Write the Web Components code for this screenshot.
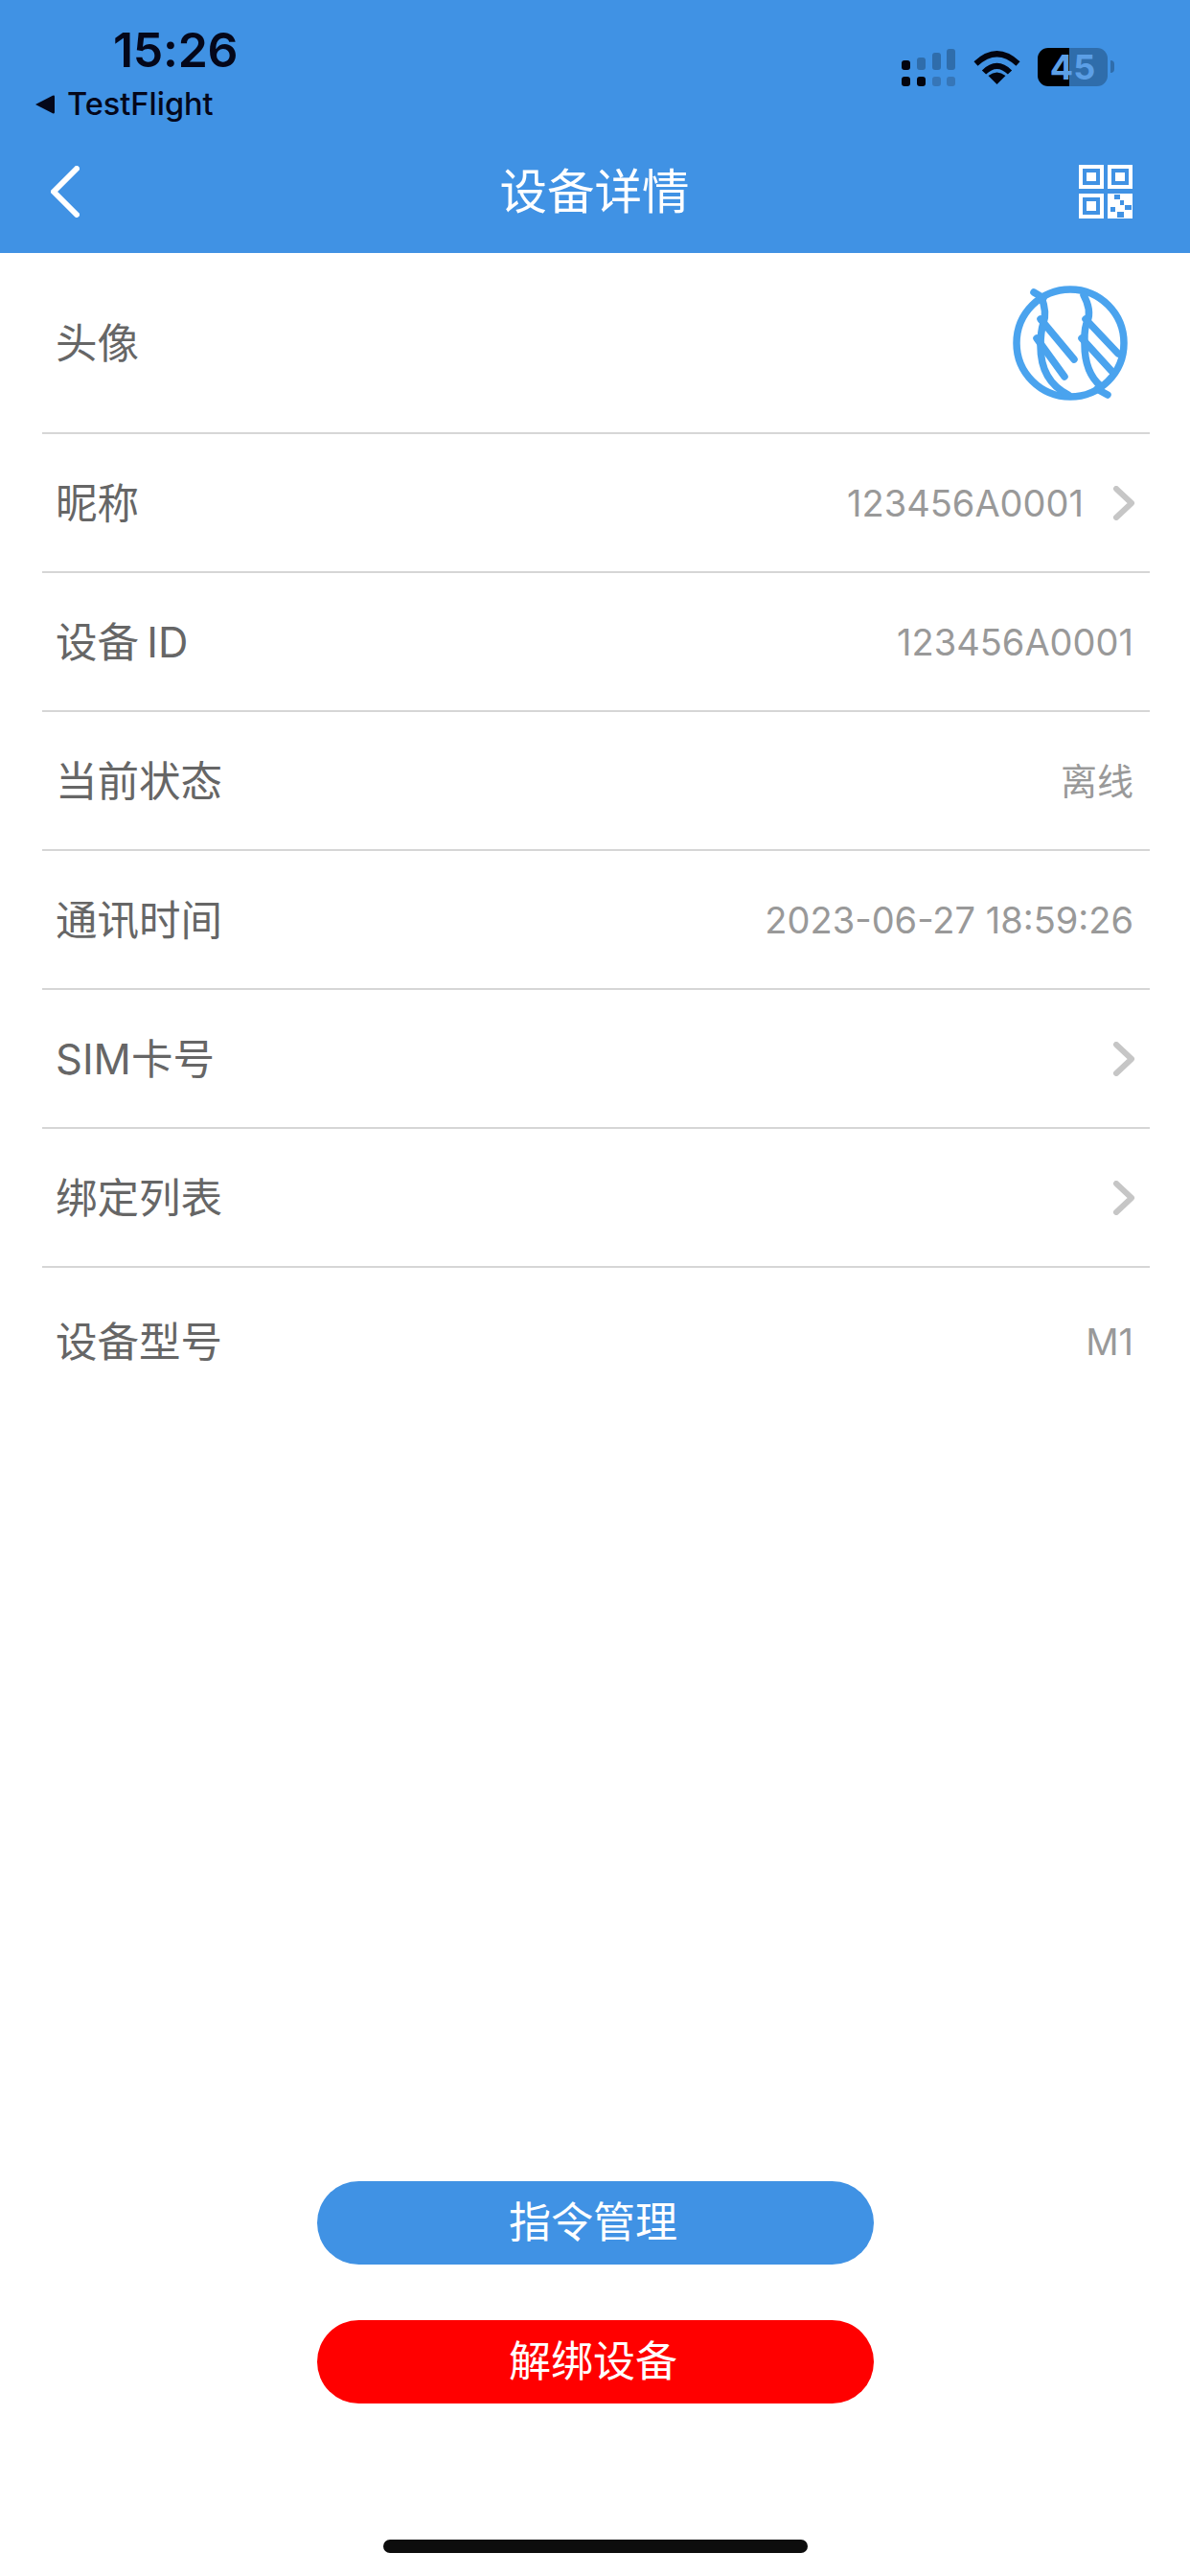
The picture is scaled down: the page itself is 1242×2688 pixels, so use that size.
<!DOCTYPE html>
<html lang="zh-CN"><head><meta charset="utf-8"><title>设备详情</title>
<style>
html,body{margin:0;padding:0;background:#fff}
body{width:1242px;height:2688px;font-family:Inter,"Noto Sans CJK SC",sans-serif;overflow:hidden}
device-page{height:2688px}
</style></head><body>
<device-page>
  <app-header slot="header" title-text="设备详情"></app-header>
  <detail-row height="189" label="头像"><device-avatar></device-avatar></detail-row>
  <detail-row label="昵称" value="123456A0001" arrow></detail-row>
  <detail-row label="设备 ID" value="123456A0001"></detail-row>
  <detail-row label="当前状态" value="离线"></detail-row>
  <detail-row label="通讯时间" value="2023-06-27 18:59:26"></detail-row>
  <detail-row label="SIM卡号" arrow></detail-row>
  <detail-row label="绑定列表" arrow></detail-row>
  <detail-row height="156" label="设备型号" value="M1" last></detail-row>
  <pill-button slot="actions" color="#4092e4">指令管理</pill-button>
  <pill-button slot="actions" color="#ff0000">解绑设备</pill-button>
</device-page>
<script>
function def(name, css, html){
  customElements.define(name, class extends HTMLElement{
    connectedCallback(){
      if(this.shadowRoot) return;
      const r=this.attachShadow({mode:'open'});
      r.innerHTML='<style>'+css+'</style>'+(typeof html==='function'?html(this):html);
    }
  });
}
def('device-page',`
  :host{display:flex;flex-direction:column;background:#fff}
  .list{display:flex;flex-direction:column}
  .actions{margin-top:auto;display:flex;flex-direction:column;align-items:center;gap:58px}
  .home{align-self:center;width:443px;height:14px;border-radius:7px;background:#0d0d0d;margin:142px 0 24px}
`,`<slot name="header"></slot><div class="list"><slot></slot></div>
  <div class="actions"><slot name="actions"></slot></div><div class="home"></div>`);

def('app-header',`
  :host{display:block;height:264px;background:#4092e4;color:#fff}
  .status{display:flex;justify-content:space-between;height:143px;color:#04071a}
  .left{display:flex;flex-direction:column;padding:24px 0 0 36px}
  .time{font-size:50px;line-height:56px;font-weight:600;margin-left:82px;letter-spacing:-.3px}
  .back{display:flex;align-items:center;gap:13px;font-size:32.500px;line-height:38px;font-weight:500;margin-top:10px}
  .right{display:flex;align-items:flex-start;padding:50px 86px 0 0}
  .wifi{margin-left:19px;margin-top:2px}
  .batt{margin-left:18px;position:relative;display:flex;align-items:center;justify-content:center;width:73px;height:40px;border-radius:11px;
    background:linear-gradient(90deg,#000 33px,#2f6dab 33px);color:#5c9fe6;font-size:36px;line-height:40px;font-weight:700}
  .tip{position:absolute;left:76px;top:13px;width:4px;height:13px;border-radius:0 5px 5px 0;background:#2f6dab}
  .nav{display:flex;align-items:center;box-sizing:border-box;height:121px;padding:0 60px 8px 53px}
  .nav h1{flex:1;margin:0;text-align:center;font-size:49.500px;font-weight:400;line-height:60px;padding-left:32px}
  svg{display:block;flex:none}
`,el=>`<div class="status">
  <div class="left"><div class="time">15:26</div>
    <div class="back"><svg width="21" height="20" viewBox="0 0 21 20"><path d="M1 10 19 .8Q21 0 21 2V18Q21 20 19 19.2Z" fill="#04071a"/></svg><span>TestFlight</span></div></div>
  <div class="right">
    <svg width="56" height="40" viewBox="0 0 56 40"><g fill="#2f6dab"><rect x="16" y="10" width="9" height="13" rx="3"/><rect x="32" y="5" width="9" height="18" rx="3"/><rect x="47" y="1" width="9" height="22" rx="3"/></g><g fill="#3676b8"><rect x="32" y="30" width="9" height="10" rx="3"/><rect x="47" y="30" width="9" height="10" rx="3"/></g><g fill="#02040f"><rect x="0" y="13" width="9" height="10" rx="3"/><rect x="0" y="30" width="9" height="10" rx="3"/><rect x="16" y="30" width="9" height="10" rx="3"/></g></svg>
    <svg class="wifi" width="49" height="36" viewBox="0 0 49 36"><g fill="none" stroke="#02040f" stroke-width="6"><path d="M2.500 14.500Q24.500-6 46.500 14.500"/><path d="M11 23.500Q24.500 10 38 23.500"/></g><path d="M24.500 36 15.500 27Q24.500 20 33.500 27Z" fill="#02040f"/></svg>
    <div class="batt"><span>45</span><div class="tip"></div></div>
  </div></div>
  <div class="nav">
    <svg width="30" height="54" viewBox="0 0 30 54"><path d="M27 3 3 27 27 51" fill="none" stroke="#fff" stroke-width="6" stroke-linecap="round" stroke-linejoin="round"/></svg>
    <h1>${el.getAttribute('title-text')}</h1>
    <svg width="56" height="56" viewBox="0 0 56 56" fill="#fff"><path fill-rule="evenodd" d="M0 0H26V25H0ZM4 4V21H22V4Z"/><rect x="8" y="8" width="10" height="9"/><path fill-rule="evenodd" d="M30 0H56V25H30ZM34 4V21H52V4Z"/><rect x="38" y="8" width="10" height="9"/><path fill-rule="evenodd" d="M0 30H26V56H0ZM4 34V52H22V34Z"/><rect x="8" y="38" width="10" height="10"/><path fill-rule="evenodd" d="M30 30H56V56H30ZM37 31V36H43V31ZM43 37V42H47V37ZM33 44V49H38V44ZM48 42V47H55V42ZM40 49V55H47V49Z"/></svg>
  </div>`);

def('detail-row',`
  :host{display:block;padding:0 42px 0 44px}
  .row{display:flex;align-items:center;box-sizing:border-box;border-bottom:2px solid #d6d6d6;padding:0 0 0 14px}
  .row.last{border-bottom-color:transparent}
  .label{font-size:43.500px;line-height:50px;color:#666;white-space:nowrap;word-spacing:-4px}
  .end{margin-left:auto;display:flex;align-items:center;padding-right:17px}
  .value{font-size:38px;line-height:46px;color:#999;white-space:nowrap}
  svg{display:block;margin:0 -2px 0 30px}
`,el=>{
  const h=el.getAttribute('height')||145, v=el.getAttribute('value'), a=el.hasAttribute('arrow');
  return `<div class="row${el.hasAttribute('last')?' last':''}" style="height:${h}px">
    <span class="label">${el.getAttribute('label')}</span>
    <div class="end">${v?`<span class="value">${v}</span>`:''}${a?`<svg width="24" height="36" viewBox="0 0 24 36"><path d="M4 3 20 18 4 33" fill="none" stroke="#c6c6c6" stroke-width="6" stroke-linecap="round" stroke-linejoin="round"/></svg>`:''}<slot></slot></div></div>`;
});

def('device-avatar',`:host{display:block;margin-right:3px}svg{display:block}`,
`<svg width="126" height="126" viewBox="0 0 126 126" fill="none" stroke="#4aa3ee" stroke-width="7.500" stroke-linecap="round">
<g transform="translate(-25,-14)">
<circle cx="88" cy="77" r="56"/>
<path d="M50 24 60 30"/><path d="M116 125 127 131"/>
<path d="M58 29C62 40 63 48 60 56 57 65 57 72 57 80 57 105 68 122 86 131"/>
<path d="M57 52 92 94"/><path d="M53 72 82 112"/>
<path d="M102 27C108 38 109 46 106 54 102 62 103 70 103 78 103 95 108 112 120 122"/>
<path d="M104 52 138 88"/><path d="M100 72 131 106"/>
</g></svg>`);

def('pill-button',`
  :host{display:flex;align-items:center;justify-content:center;box-sizing:border-box;width:581px;height:87px;border-radius:44px;padding-right:4px;
   color:#fff;font-size:44px;line-height:87px;background:var(--bg)}
`,`<slot></slot>`);
document.querySelectorAll('pill-button').forEach(b=>b.style.setProperty('--bg',b.getAttribute('color')));
</script>
</body></html>
